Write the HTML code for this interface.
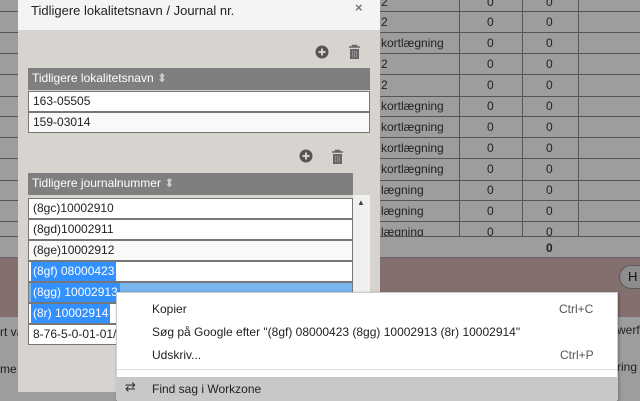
<!DOCTYPE html>
<html><head><meta charset="utf-8"><style>
*{box-sizing:border-box;margin:0;padding:0}
body{width:640px;height:400px;overflow:hidden;background:#9d9d9d;font-family:"Liberation Sans","DejaVu Sans",sans-serif;font-size:12px;position:relative;color:#111}
.a{position:absolute}
.hl{position:absolute;left:0;right:0;height:1px;background:#555}
.vl{position:absolute;top:0;height:236px;width:1px;background:#555}
.cell{position:absolute;font-size:12px;color:#222}
.row{position:absolute;left:0;right:0;height:21px;border:1px solid #777;background:#fff;padding-left:4px;line-height:19px;font-size:12px;color:#222}
.sel{display:inline-block;height:19px;background:#3390ff;color:#fff;padding:0 2px;margin-left:-2px}
</style></head><body>
<div class="a" style="left:0;top:0;width:640px;height:236px">
<div class="hl" style="top:11px"></div><div class="hl" style="top:32px"></div><div class="hl" style="top:53px"></div><div class="hl" style="top:74px"></div><div class="hl" style="top:96px"></div><div class="hl" style="top:116px"></div><div class="hl" style="top:137px"></div><div class="hl" style="top:158px"></div><div class="hl" style="top:180px"></div><div class="hl" style="top:200px"></div><div class="hl" style="top:221px"></div><div class="hl" style="top:236px"></div>
<div class="vl" style="left:459px"></div><div class="vl" style="left:522px"></div><div class="vl" style="left:578px"></div>
</div>
<div class="a" style="left:0;top:257px;width:640px;height:1px;background:#666"></div>
<div class="a" style="left:0;top:258px;width:640px;height:59px;background:#846f6f"></div>
<div class="a" style="left:619px;top:265px;width:50px;height:24px;border-radius:12px;background:#8d8d8d;border:1px solid #5a5a5a;padding-left:8px;line-height:22px;font-size:13px">H</div>
<div class="cell" style="left:381px;top:-5px">2</div>
<div class="cell" style="left:381px;top:15px">2</div>
<div class="cell" style="left:381px;top:36px">kortlægning</div>
<div class="cell" style="left:381px;top:57px">2</div>
<div class="cell" style="left:381px;top:78px">2</div>
<div class="cell" style="left:381px;top:99px">kortlægning</div>
<div class="cell" style="left:381px;top:120px">kortlægning</div>
<div class="cell" style="left:381px;top:141px">kortlægning</div>
<div class="cell" style="left:381px;top:162px">kortlægning</div>
<div class="cell" style="left:381px;top:183px">lægning</div>
<div class="cell" style="left:381px;top:204px">lægning</div>
<div class="cell" style="left:381px;top:225px;height:11px;overflow:hidden">lægning</div>
<div class="cell" style="left:487px;top:-5px">0</div><div class="cell" style="left:546px;top:-5px">0</div>
<div class="cell" style="left:487px;top:15px">0</div><div class="cell" style="left:546px;top:15px">0</div>
<div class="cell" style="left:487px;top:36px">0</div><div class="cell" style="left:546px;top:36px">0</div>
<div class="cell" style="left:487px;top:57px">0</div><div class="cell" style="left:546px;top:57px">0</div>
<div class="cell" style="left:487px;top:78px">0</div><div class="cell" style="left:546px;top:78px">0</div>
<div class="cell" style="left:487px;top:99px">0</div><div class="cell" style="left:546px;top:99px">0</div>
<div class="cell" style="left:487px;top:120px">0</div><div class="cell" style="left:546px;top:120px">0</div>
<div class="cell" style="left:487px;top:141px">0</div><div class="cell" style="left:546px;top:141px">0</div>
<div class="cell" style="left:487px;top:162px">0</div><div class="cell" style="left:546px;top:162px">0</div>
<div class="cell" style="left:487px;top:183px">0</div><div class="cell" style="left:546px;top:183px">0</div>
<div class="cell" style="left:487px;top:204px">0</div><div class="cell" style="left:546px;top:204px">0</div>
<div class="cell" style="left:487px;top:225px;height:11px;overflow:hidden">0</div><div class="cell" style="left:546px;top:225px;height:11px;overflow:hidden">0</div>
<div class="cell" style="left:546px;top:241px;font-weight:bold">0</div>
<div class="cell" style="left:617px;top:323px">werf</div>
<div class="cell" style="left:617px;top:360px">ring</div>
<div class="cell" style="left:0;top:325px">rt va</div>
<div class="cell" style="left:0;top:362px">me</div>
<div class="a" style="left:18px;top:0;width:362px;height:392px;background:#d7d4cf">
 <div class="a" style="left:0;top:0;width:362px;height:30px;background:#f4f4f4;padding:3px 0 0 13px;font-size:13px;color:#222">Tidligere lokalitetsnavn / Journal nr.</div>
 <div class="a" style="left:337px;top:0;font-size:13px;color:#777;font-weight:bold">×</div>
 <svg class="a" style="left:297px;top:45px" width="14" height="14"><circle cx="7" cy="7" r="6.5" fill="#555"/><path d="M7 3.5v7M3.5 7h7" stroke="#d7d4cf" stroke-width="2"/></svg>
 <svg class="a" style="left:330px;top:44px" width="13" height="16"><path d="M1 3h11M4.5 3V1.5h4V3" stroke="#666" stroke-width="1.5" fill="none"/><rect x="2" y="5" width="9" height="10" fill="#666"/><path d="M4.5 6.5v7M6.5 6.5v7M8.5 6.5v7" stroke="#999" stroke-width="0.8"/></svg>
 <div class="a" style="left:10px;top:68px;width:342px;height:22px;background:#7f7f7f;color:#fff;font-size:12px;padding:3px 0 0 4px">Tidligere lokalitetsnavn <span style="color:#ccc">⬍</span></div>
 <div class="a" style="left:10px;top:91px;width:342px;height:44px">
  <div class="row" style="top:0">163-05505</div><div class="row" style="top:21px;background:#f9f9f9">159-03014</div>
 </div>
 <svg class="a" style="left:281px;top:149px" width="14" height="14"><circle cx="7" cy="7" r="6.5" fill="#555"/><path d="M7 3.5v7M3.5 7h7" stroke="#d7d4cf" stroke-width="2"/></svg>
 <svg class="a" style="left:313px;top:149px" width="13" height="16"><path d="M1 3h11M4.5 3V1.5h4V3" stroke="#666" stroke-width="1.5" fill="none"/><rect x="2" y="5" width="9" height="10" fill="#666"/><path d="M4.5 6.5v7M6.5 6.5v7M8.5 6.5v7" stroke="#999" stroke-width="0.8"/></svg>
 <div class="a" style="left:10px;top:173px;width:325px;height:22px;background:#7f7f7f;color:#fff;font-size:12px;padding:3px 0 0 4px">Tidligere journalnummer <span style="color:#ccc">⬍</span></div>
 <div class="a" style="left:335px;top:195px;width:17px;height:197px;background:#f0f0f0"></div>
 <div class="a" style="left:339px;top:198px;font-size:8px;color:#444">▲</div>
 <div class="a" style="left:10px;top:198px;width:325px;height:150px;overflow:hidden">
  <div class="row" style="top:0">(8gc)10002910</div>
  <div class="row" style="top:21px">(8gd)10002911</div>
  <div class="row" style="top:42px;background:#f9f9f9">(8ge)10002912</div>
  <div class="row" style="top:63px"><span class="sel">(8gf) 08000423</span></div>
  <div class="row" style="top:84px;background:#7ab6ee"><span class="sel">(8gg) 10002913</span></div>
  <div class="row" style="top:105px"><span class="sel">(8r) 10002914</span></div>
  <div class="row" style="top:126px">8-76-5-0-01-01/</div>
 </div>
</div>
<div class="a" style="left:116px;top:292px;width:502px;height:108px;background:#fff;border:1px solid #ccc;box-shadow:1px 1px 3px rgba(0,0,0,.3);font-size:12px;color:#222">
 <div class="a" style="left:35px;top:9px">Kopier</div><div class="a" style="left:442px;top:9px;color:#555">Ctrl+C</div>
 <div class="a" style="left:35px;top:32px">Søg på Google efter "(8gf) 08000423 (8gg) 10002913 (8r) 10002914"</div>
 <div class="a" style="left:35px;top:55px">Udskriv...</div><div class="a" style="left:443px;top:55px;color:#555">Ctrl+P</div>
 <div class="a" style="left:0;top:76px;width:500px;height:1px;background:#ddd"></div>
 <div class="a" style="left:0;top:84px;width:500px;height:24px;background:#c8c8c8"></div>
 <div class="a" style="left:8px;top:86px;font-size:13px;color:#333">⇄</div>
 <div class="a" style="left:35px;top:89px">Find sag i Workzone</div>
</div>
</body></html>
